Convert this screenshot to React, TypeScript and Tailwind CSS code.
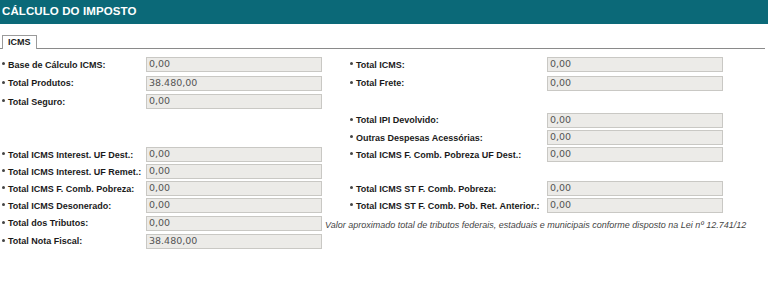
type Cell = { label: string; value: string } | null;

type Row = { h: string; left: Cell; right: Cell | 'note' };

const rows: Row[] = [
  { h: 'h-[19px]', left: { label: 'Base de Cálculo ICMS:', value: '0,00' }, right: { label: 'Total ICMS:', value: '0,00' } },
  { h: 'h-[18px]', left: { label: 'Total Produtos:', value: '38.480,00' }, right: { label: 'Total Frete:', value: '0,00' } },
  { h: 'h-[19px]', left: { label: 'Total Seguro:', value: '0,00' }, right: null },
  { h: 'h-[18px]', left: null, right: { label: 'Total IPI Devolvido:', value: '0,00' } },
  { h: 'h-[17px]', left: null, right: { label: 'Outras Despesas Acessórias:', value: '0,00' } },
  { h: 'h-[17px]', left: { label: 'Total ICMS Interest. UF Dest.:', value: '0,00' }, right: { label: 'Total ICMS F. Comb. Pobreza UF Dest.:', value: '0,00' } },
  { h: 'h-[17px]', left: { label: 'Total ICMS Interest. UF Remet.:', value: '0,00' }, right: null },
  { h: 'h-[17px]', left: { label: 'Total ICMS F. Comb. Pobreza:', value: '0,00' }, right: { label: 'Total ICMS ST F. Comb. Pobreza:', value: '0,00' } },
  { h: 'h-[17px]', left: { label: 'Total ICMS Desonerado:', value: '0,00' }, right: { label: 'Total ICMS ST F. Comb. Pob. Ret. Anterior.:', value: '0,00' } },
  { h: 'h-[18px]', left: { label: 'Total dos Tributos:', value: '0,00' }, right: 'note' },
  { h: 'h-[18px]', left: { label: 'Total Nota Fiscal:', value: '38.480,00' }, right: null },
];

const Field = ({ cell, labelW }: { cell: Cell; labelW: string }) => {
  if (!cell) return null;
  return (
    <div className="flex items-center">
      <span className="w-[3px] h-[3px] rounded-full bg-[#444] mr-[3px] -translate-y-[1px]"></span>
      <span className={`${labelW} font-bold text-[9px] leading-[12px] text-[#1a1a1a] whitespace-nowrap`}>{cell.label}</span>
      <div className="w-[176px] h-[15px] bg-[#ecebe8] border border-[#c9c8c4] pl-[2px] flex items-center text-[9.5px] text-[#555] font-['DejaVu_Sans',sans-serif]">
        {cell.value}
      </div>
    </div>
  );
};

export default function App() {
  return (
    <div className="w-[768px] h-[283px] bg-white font-['Liberation_Sans',Arial,sans-serif]">
      <div className="h-[24px] bg-[#0b6978] flex items-center pl-[2px]">
        <h1 className="text-white font-bold text-[11.5px] tracking-[0.1px]">CÁLCULO DO IMPOSTO</h1>
      </div>

      <div className="mt-[11px] mr-[3px] border-b border-[#8a8a8a] flex pl-[2px]">
        <div className="h-[14px] px-[5px] border border-b-0 border-[#9a9a9a] bg-white -mb-px flex items-center font-bold text-[9px] text-[#1a1a1a]">
          ICMS
        </div>
      </div>

      <div className="mt-[6px]">
        {rows.map((r, i) => (
          <div key={i} className={`${r.h} flex items-center`}>
            <div className="w-[348px] pl-[2px]">
              <Field cell={r.left} labelW="w-[138px]" />
            </div>
            <div className="flex-1">
              {r.right === 'note' ? (
                <span className="italic text-[9px] text-[#444] -ml-[23px]">
                  Valor aproximado total de tributos federais, estaduais e municipais conforme disposto na Lei nº 12.741/12
                </span>
              ) : (
                <div className="pl-[2px]">
                  <Field cell={r.right} labelW="w-[191px]" />
                </div>
              )}
            </div>
          </div>
        ))}
      </div>
    </div>
  );
}
